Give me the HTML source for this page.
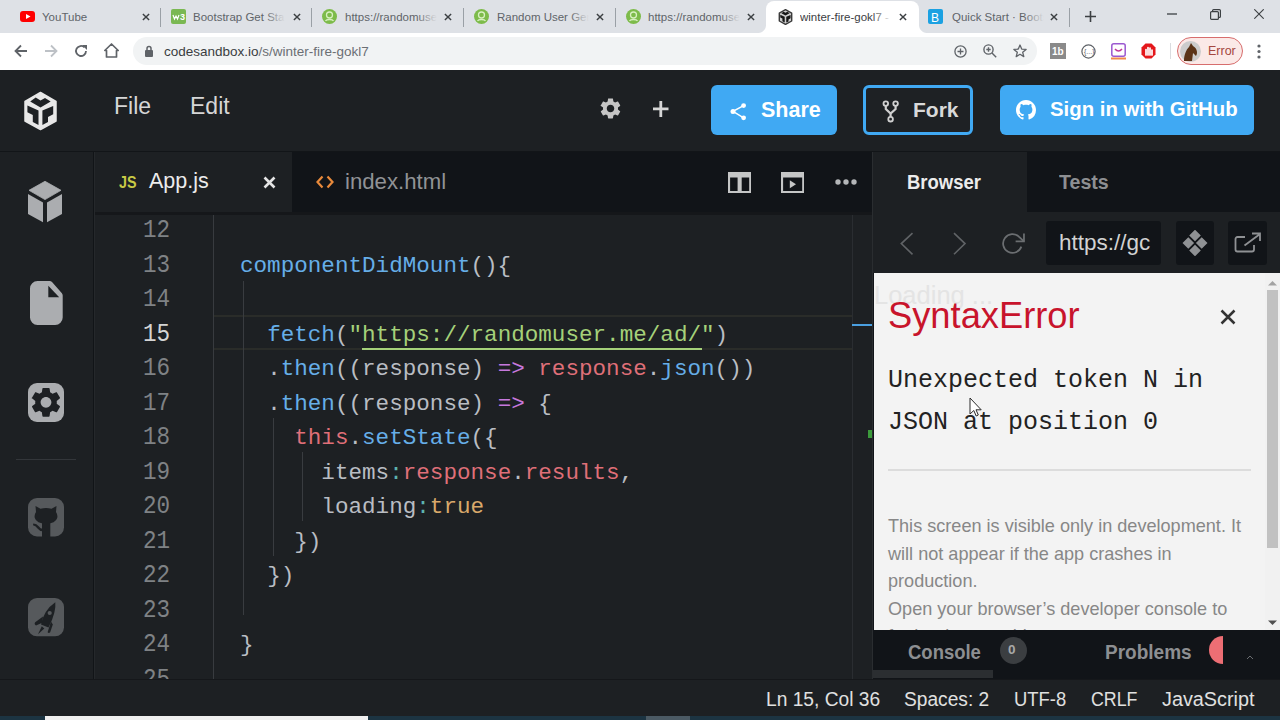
<!DOCTYPE html>
<html><head><meta charset="utf-8">
<style>
*{margin:0;padding:0;box-sizing:border-box}
html,body{width:1280px;height:720px;overflow:hidden;background:#1d2023;font-family:"Liberation Sans",sans-serif}
.a{position:absolute}
.t{position:absolute;white-space:nowrap}
/* chrome */
#tabs{left:0;top:0;width:1280px;height:33px;background:#dee1e6}
.ctab{position:absolute;top:0;height:33px;font-size:13px;color:#3c4043}
.ctab .ic{position:absolute;top:9px;width:15px;height:15px}
.ctab .tx{position:absolute;top:10px;font-size:11.5px;line-height:15px;width:92px;overflow:hidden;white-space:nowrap;color:#606469}
.ctab .tx:after{content:"";position:absolute;right:0;top:0;width:20px;height:15px;background:linear-gradient(90deg,rgba(222,225,230,0),#dee1e6)}
.ctab.act .tx:after{background:linear-gradient(90deg,rgba(255,255,255,0),#fff)}
.ctab .x{position:absolute;top:13px;width:8px;height:8px}
.sep{position:absolute;top:8px;width:1px;height:19px;background:#9aa0a6}
#addr{left:0;top:33px;width:1280px;height:37px;background:#fff}
#omni{left:133px;top:37px;width:904px;height:28px;border-radius:14px;background:#f1f3f4}
/* csb */
#hdr{left:0;top:70px;width:1280px;height:82px;background:#1d2023;border-bottom:1px solid #121518}
.btn{position:absolute;top:85px;height:50px;border-radius:6px;background:#40a9f3;color:#fff;font-weight:bold;font-size:21px}
#act{left:0;top:152px;width:95px;height:527px;background:#1d2023;border-right:1px solid #25282b}
#act:after{content:"";position:absolute;left:93px;top:0;width:1px;height:527px;background:#111417}
#etabs{left:95px;top:152px;width:777px;height:60px;background:#111418}
#code{left:95px;top:212px;width:778px;height:467px;background:#1d2023;overflow:hidden}
#rp{left:872px;top:152px;width:408px;height:527px;background:#111418;border-left:1px solid #2a2d30}
#status{left:0;top:679px;width:1280px;height:37px;background:#1d2023;border-top:1px solid #15171a}
#task{left:0;top:716px;width:1280px;height:4px;background:#1c3442}
.mono{font-family:"Liberation Mono",monospace}
.ln{position:absolute;left:0;margin-top:1px;width:75px;text-align:right;color:#7f8285;font-size:22.6px;line-height:34.5px;transform:scaleY(1.15)}
.cl{position:absolute;left:145px;margin-top:1.5px;font-size:22.6px;line-height:34.5px;color:#c5c8c6;white-space:pre}
.fn{color:#66aee8}
.pu{color:#c678dd}
.rd{color:#df6f78}
.or{color:#d8a86a}
.gn{color:#a5d17a}
.gr{color:#b9bdc3}
.cy{color:#5db3b0}
</style></head><body>

<!-- ============ CHROME TAB STRIP ============ -->
<div id="tabs" class="a">
  <div class="ctab" style="left:8px;width:152px">
    <svg class="ic" style="left:12px" viewBox="0 0 15 15"><rect x="0" y="2" width="15" height="11" rx="3" fill="#f00"/><path d="M6 5 L10.5 7.5 L6 10Z" fill="#fff"/></svg>
    <div class="tx" style="left:34px">YouTube</div>
    <svg class="x" style="left:134px" viewBox="0 0 9 9"><path d="M1 1L8 8M8 1L1 8" stroke="#3c4043" stroke-width="1.6"/></svg>
  </div>
  <div class="sep" style="left:160px"></div>
  <div class="ctab" style="left:160px;width:152px">
    <svg class="ic" style="left:11px" viewBox="0 0 15 15"><rect x="0" y="0" width="15" height="15" rx="2" fill="#7ab852"/><path d="M2 6l1.5 4 1.5-3 1.5 3 1.5-4" stroke="#fff" stroke-width="1.2" fill="none"/><text x="9" y="11" font-size="9" fill="#fff" font-family="Liberation Sans" font-weight="bold">3</text></svg>
    <div class="tx" style="left:33px">Bootstrap Get Started</div>
    <svg class="x" style="left:133px" viewBox="0 0 9 9"><path d="M1 1L8 8M8 1L1 8" stroke="#3c4043" stroke-width="1.6"/></svg>
  </div>
  <div class="sep" style="left:311px"></div>
  <div class="ctab" style="left:311px;width:152px">
    <svg class="ic" style="left:11px" viewBox="0 0 15 15"><circle cx="7.5" cy="7.5" r="7.5" fill="#7dbb4a"/><circle cx="7.5" cy="6" r="3" fill="none" stroke="#d7f0c0" stroke-width="1.3"/><path d="M3.5 12c1-2 7-2 8 0" stroke="#d7f0c0" stroke-width="1.3" fill="none"/></svg>
    <div class="tx" style="left:34px">https://randomuser.me</div>
    <svg class="x" style="left:133px" viewBox="0 0 9 9"><path d="M1 1L8 8M8 1L1 8" stroke="#3c4043" stroke-width="1.6"/></svg>
  </div>
  <div class="sep" style="left:463px"></div>
  <div class="ctab" style="left:463px;width:152px">
    <svg class="ic" style="left:11px" viewBox="0 0 15 15"><circle cx="7.5" cy="7.5" r="7.5" fill="#7dbb4a"/><circle cx="7.5" cy="6" r="3" fill="none" stroke="#d7f0c0" stroke-width="1.3"/><path d="M3.5 12c1-2 7-2 8 0" stroke="#d7f0c0" stroke-width="1.3" fill="none"/></svg>
    <div class="tx" style="left:34px">Random User Generator</div>
    <svg class="x" style="left:133px" viewBox="0 0 9 9"><path d="M1 1L8 8M8 1L1 8" stroke="#3c4043" stroke-width="1.6"/></svg>
  </div>
  <div class="sep" style="left:615px"></div>
  <div class="ctab" style="left:615px;width:152px">
    <svg class="ic" style="left:11px" viewBox="0 0 15 15"><circle cx="7.5" cy="7.5" r="7.5" fill="#7dbb4a"/><circle cx="7.5" cy="6" r="3" fill="none" stroke="#d7f0c0" stroke-width="1.3"/><path d="M3.5 12c1-2 7-2 8 0" stroke="#d7f0c0" stroke-width="1.3" fill="none"/></svg>
    <div class="tx" style="left:33px">https://randomuser.me</div>
    <svg class="x" style="left:132px" viewBox="0 0 9 9"><path d="M1 1L8 8M8 1L1 8" stroke="#3c4043" stroke-width="1.6"/></svg>
  </div>
  <div class="a" style="left:758px;top:25px;width:8px;height:8px;background:radial-gradient(circle at 0 0,#dee1e6 7.5px,#fff 8.5px)"></div>
  <div class="a" style="left:919px;top:25px;width:8px;height:8px;background:radial-gradient(circle at 100% 0,#dee1e6 7.5px,#fff 8.5px)"></div>
  <div class="ctab act" style="left:766px;top:1px;width:153px;height:32px;background:#fff;border-radius:8px 8px 0 0">
    <svg class="ic" style="left:11.5px;top:8px;width:15px;height:16px" viewBox="3 3 35 40"><path d="M20.5 4.5L36 13.5V33L20.5 41.6 5 33V13.5z" fill="#cfcfcf" stroke="#3a3a3a" stroke-width="3.5" stroke-linejoin="round"/><path d="M10.2 13.4L20.5 19.5 30.7 13.4 25 9.9 20.5 12.5 15.7 9.6z" fill="#151515"/><path d="M7.4 17.6L18.5 22.5V37L12.8 33.9V26.9L7.4 24.3z" fill="#151515"/><path d="M33.2 17.9L22.4 22.5V37L28 34V29L33.2 26.3z" fill="#151515"/></svg>
    <div class="tx" style="left:34px;top:9px;color:#3c4043">winter-fire-gokl7 - CodeSandbox</div>
    <svg class="x" style="left:133px;top:12px" viewBox="0 0 9 9"><path d="M1 1L8 8M8 1L1 8" stroke="#3c4043" stroke-width="1.6"/></svg>
  </div>
  <div class="ctab" style="left:919px;width:152px">
    <svg class="ic" style="left:9px" viewBox="0 0 15 15"><rect width="15" height="15" rx="2" fill="#1ba1e2"/><text x="3" y="12.5" font-size="12" fill="#fff" font-family="Liberation Sans">B</text></svg>
    <div class="tx" style="left:33px">Quick Start · Bootstrap</div>
    <svg class="x" style="left:131px" viewBox="0 0 9 9"><path d="M1 1L8 8M8 1L1 8" stroke="#3c4043" stroke-width="1.6"/></svg>
  </div>
  <div class="sep" style="left:1069px"></div>
  <svg class="a" style="left:1085px;top:11px" width="11" height="11" viewBox="0 0 11 11"><path d="M5.5 0v11M0 5.5h11" stroke="#3c4043" stroke-width="1.6"/></svg>
  <svg class="a" style="left:1166.5px;top:13px" width="10" height="2" viewBox="0 0 10 2"><path d="M0 1h10" stroke="#3c4043" stroke-width="1.3"/></svg>
  <svg class="a" style="left:1209.5px;top:8.5px" width="11" height="11" viewBox="0 0 11 11"><rect x="0.6" y="2.6" width="7.8" height="7.8" rx="1" fill="none" stroke="#3c4043" stroke-width="1.2"/><path d="M2.6 2.6V1.6a1 1 0 0 1 1-1h5.8a1 1 0 0 1 1 1v5.8a1 1 0 0 1-1 1h-1" fill="none" stroke="#3c4043" stroke-width="1.2"/></svg>
  <svg class="a" style="left:1253.5px;top:9px" width="10" height="10" viewBox="0 0 10 10"><path d="M0.3 0.3L9.7 9.7M9.7 0.3L0.3 9.7" stroke="#3c4043" stroke-width="1.1"/></svg>
</div>

<!-- ============ ADDRESS BAR ============ -->
<div id="addr" class="a">
  <svg class="a" style="left:14px;top:11px" width="14" height="14" viewBox="0 0 14 14"><path d="M13 7H2M7 1.5L1.5 7 7 12.5" fill="none" stroke="#5f6368" stroke-width="1.8"/></svg>
  <svg class="a" style="left:44px;top:11px" width="14" height="14" viewBox="0 0 14 14"><path d="M1 7h11M7 1.5L12.5 7 7 12.5" fill="none" stroke="#bdc1c6" stroke-width="1.8"/></svg>
  <svg class="a" style="left:74px;top:11px" width="14" height="14" viewBox="0 0 14 14"><path d="M12 7a5 5 0 1 1-1.5-3.6" fill="none" stroke="#5f6368" stroke-width="1.8"/><path d="M8 1h5v5z" fill="#5f6368"/></svg>
  <svg class="a" style="left:104px;top:10px" width="15" height="15" viewBox="0 0 15 15"><path d="M2.5 14V7.5H0.8L7.5 1l6.7 6.5h-1.7V14z" fill="none" stroke="#5f6368" stroke-width="1.7" stroke-linejoin="round"/></svg>
</div>
<div id="omni" class="a">
  <svg class="a" style="left:12px;top:8px" width="8" height="12" viewBox="0 0 8 12"><rect x="0" y="5" width="8" height="7" rx="1" fill="#5f6368"/><path d="M2 5.5V3.5a2 2 0 0 1 4 0v2" fill="none" stroke="#5f6368" stroke-width="1.5"/></svg>
  <div class="t" style="left:31px;top:7px;font-size:13.5px;line-height:16px;color:#3a3d41">codesandbox.io<span style="color:#6b6f74">/s/winter-fire-gokl7</span></div>
</div>
<svg class="a" style="left:954px;top:45px" width="13" height="13" viewBox="0 0 13 13"><circle cx="6.5" cy="6.5" r="5.6" fill="none" stroke="#5f6368" stroke-width="1.3"/><path d="M6.5 3.5v6M3.5 6.5h6" stroke="#5f6368" stroke-width="1.3"/></svg>
<svg class="a" style="left:983px;top:44px" width="14" height="14" viewBox="0 0 14 14"><circle cx="5.5" cy="5.5" r="4.6" fill="none" stroke="#5f6368" stroke-width="1.4"/><path d="M9 9l4.2 4.2M5.5 3.3v4.4M3.3 5.5h4.4" stroke="#5f6368" stroke-width="1.4"/></svg>
<svg class="a" style="left:1013px;top:44px" width="14" height="14" viewBox="0 0 14 14"><path d="M7 1l1.7 4.1 4.4.3-3.4 2.9 1.1 4.3L7 10.3l-3.8 2.3 1.1-4.3L.9 5.4l4.4-.3z" fill="none" stroke="#5f6368" stroke-width="1.3" stroke-linejoin="round"/></svg>
<svg class="a" style="left:1050px;top:43px" width="16" height="16" viewBox="0 0 16 16"><rect width="16" height="16" fill="#8a8a8a"/><text x="2" y="12" font-size="10" font-weight="bold" fill="#fff" font-family="Liberation Sans">1b</text></svg>
<svg class="a" style="left:1081px;top:44px" width="15" height="15" viewBox="0 0 15 15"><circle cx="7.5" cy="7.5" r="6.6" fill="none" stroke="#5f6368" stroke-width="1.2"/><text x="3" y="10" font-size="7" fill="#5f6368" font-family="Liberation Sans">{...}</text></svg>
<svg class="a" style="left:1111px;top:43px" width="15" height="17" viewBox="0 0 15 17"><rect x="0.8" y="0.8" width="13.4" height="12.4" rx="2" fill="none" stroke="#9b59d0" stroke-width="1.5"/><path d="M4 6q3.5 4 7 0" fill="none" stroke="#c0399a" stroke-width="1.5"/><rect x="0" y="14.5" width="15" height="2" fill="#f08a4b"/></svg>
<svg class="a" style="left:1141px;top:43px" width="15" height="16" viewBox="0 0 15 16"><path d="M4.5 0.5h6l4 4v7l-4 4h-6l-4-4v-7z" fill="#e4171b"/><path d="M5 12V6.5M7 12V4.5M9 12V5M11 12V7" stroke="#fff" stroke-width="1.7" stroke-linecap="round"/></svg>
<div class="a" style="left:1170px;top:43px;width:1px;height:16px;background:#dadce0"></div>
<div class="a" style="left:1177px;top:37px;width:66px;height:28px;border-radius:14px;border:1.5px solid #d76d6d;background:#fbe9e7"></div>
<div class="a" style="left:1180px;top:41px;width:21px;height:21px;border-radius:50%;background:#ccc"></div>
<svg class="a" style="left:1180px;top:41px" width="21" height="21" viewBox="0 0 21 21"><path d="M4 20C4 14 6 9 9 6L11 2 13 5C17 7 18 12 16 15L13 12 12 20z" fill="#5a3317"/></svg>
<div class="t" style="left:1208px;top:43px;font-size:12.5px;line-height:16px;color:#a5473f">Error</div>
<svg class="a" style="left:1257px;top:44px" width="4" height="15" viewBox="0 0 4 15"><circle cx="2" cy="2" r="1.6" fill="#5f6368"/><circle cx="2" cy="7.5" r="1.6" fill="#5f6368"/><circle cx="2" cy="13" r="1.6" fill="#5f6368"/></svg>

<!-- ============ CSB HEADER ============ -->
<div id="hdr" class="a">
  <svg class="a" style="left:20px;top:18px" width="42" height="46" viewBox="0 0 42 46"><path d="M20.5 4.5L36 13.5V33L20.5 41.6 5 33V13.5z" fill="#e8e8e8" stroke="#e8e8e8" stroke-width="1.5" stroke-linejoin="round"/><path d="M10.2 13.4L20.5 19.5 30.7 13.4 25 9.9 20.5 12.5 15.7 9.6z" fill="#1e2124"/><path d="M7.4 17.6L18.5 22.5V37L12.8 33.9V26.9L7.4 24.3z" fill="#1e2124"/><path d="M33.2 17.9L22.4 22.5V37L28 34V29L33.2 26.3z" fill="#1e2124"/></svg>
  <div class="t" style="left:114px;top:23px;font-size:23px;line-height:27px;color:#d6d6d6">File</div>
  <div class="t" style="left:190px;top:23px;font-size:23px;line-height:27px;color:#d6d6d6">Edit</div>
  <svg class="a" style="left:598px;top:25.5px" width="25" height="25" viewBox="0 0 24 24"><path fill="#c5c5c5" d="M19.14 12.94c.04-.3.06-.61.06-.94 0-.32-.02-.64-.07-.94l2.03-1.58c.18-.14.23-.41.12-.61l-1.92-3.32c-.12-.22-.37-.29-.59-.22l-2.39.96c-.5-.38-1.03-.7-1.62-.94l-.36-2.54c-.04-.24-.24-.41-.48-.41h-3.84c-.24 0-.43.17-.47.41l-.36 2.54c-.59.24-1.13.57-1.62.94l-2.39-.96c-.22-.08-.47 0-.59.22L2.74 8.87c-.12.21-.8.47.12.61l2.03 1.58c-.05.3-.09.63-.09.94s.02.64.07.94l-2.03 1.58c-.18.14-.23.41-.12.61l1.92 3.32c.12.22.37.29.59.22l2.39-.96c.5.38 1.03.7 1.62.94l.36 2.54c.05.24.24.41.48.41h3.84c.24 0 .44-.17.47-.41l.36-2.54c.59-.24 1.13-.56 1.62-.94l2.39.96c.22.08.47 0 .59-.22l1.92-3.32c.12-.22.07-.47-.12-.61l-2.01-1.58zM12 15.6c-1.98 0-3.6-1.62-3.6-3.6s1.62-3.6 3.6-3.6 3.6 1.62 3.6 3.6-1.62 3.6-3.6 3.6z"/></svg>
  <svg class="a" style="left:652.5px;top:30.5px" width="16" height="16" viewBox="0 0 16 16"><path d="M7.8 0v16M0 7.8h15.5" stroke="#d6d6d6" stroke-width="2.8"/></svg>
</div>
<div class="btn" style="left:711px;width:126px">
  <svg class="a" style="left:18px;top:16px" width="18" height="20" viewBox="0 0 18 20"><circle cx="14.6" cy="4.6" r="2.4" fill="#fff"/><circle cx="4" cy="10.4" r="2.5" fill="#fff"/><circle cx="14.6" cy="16.8" r="2.4" fill="#fff"/><path d="M14.6 4.6L4 10.4 14.6 16.8" stroke="#fff" stroke-width="1.5" fill="none"/></svg>
  <div class="t" style="left:50px;top:13px;line-height:24px;font-size:21.5px">Share</div>
</div>
<div class="btn" style="left:863px;width:110px;background:#1e2124;border:3px solid #40a9f3;color:#d9d9d9">
  <svg class="a" style="left:14px;top:10px" width="22" height="26" viewBox="0 0 22 26"><circle cx="5.8" cy="5.6" r="2.3" fill="none" stroke="#d0d0d0" stroke-width="1.8"/><circle cx="15.6" cy="5.6" r="2.3" fill="none" stroke="#d0d0d0" stroke-width="1.8"/><circle cx="10.6" cy="21.2" r="2.3" fill="none" stroke="#d0d0d0" stroke-width="1.8"/><path d="M5.8 7.9V11L10.6 15.5 15.6 11V7.9M10.6 15.5V18.9" fill="none" stroke="#d0d0d0" stroke-width="2.2"/></svg>
  <div class="t" style="left:47px;top:10px;line-height:24px">Fork</div>
</div>
<div class="btn" style="left:1000px;width:254px">
  <svg class="a" style="left:16px;top:15px" width="20" height="20" viewBox="0 0 16 16"><path fill="#fff" d="M8 0C3.58 0 0 3.58 0 8c0 3.54 2.29 6.53 5.47 7.59.4.07.55-.17.55-.38 0-.19-.01-.82-.01-1.49-2.01.37-2.53-.49-2.69-.94-.09-.23-.48-.94-.82-1.13-.28-.15-.68-.52-.01-.53.63-.01 1.08.58 1.23.82.72 1.21 1.87.87 2.33.66.07-.52.28-.87.51-1.07-1.78-.2-3.640-.89-3.64-3.95 0-.87.31-1.59.82-2.15-.08-.2-.36-1.02.08-2.12 0 0 .67-.21 2.2.82.64-.18 1.32-.27 2-.27.68 0 1.36.09 2 .27 1.53-1.04 2.2-.82 2.2-.82.44 1.1.16 1.92.08 2.12.51.56.82 1.27.82 2.15 0 3.07-1.87 3.75-3.65 3.95.29.25.54.73.54 1.48 0 1.07-.01 1.93-.01 2.2 0 .21.15.46.55.38A8.013 8.013 0 0016 8c0-4.42-3.58-8-8-8z"/></svg>
  <div class="t" style="left:50px;top:12px;line-height:24px;transform:scaleX(.969);transform-origin:0 0">Sign in with GitHub</div>
</div>

<!-- ============ ACTIVITY BAR ============ -->
<div id="act" class="a">
  <svg class="a" style="left:27px;top:28px" width="36" height="44" viewBox="0 0 36 44"><path d="M18 1.3L34 10.3 18 19.6 2 10.3z" fill="#abadb0" stroke="#abadb0" stroke-width="0.8" stroke-linejoin="round"/><path d="M1 14L16 22.6V42.3L1 34z" fill="#abadb0"/><path d="M35 14L20 22.6V42.3L35 34z" fill="#abadb0"/></svg>
  <svg class="a" style="left:29.8px;top:128.6px" width="33" height="44" viewBox="0 0 33 44"><path d="M7.5 0H19.7Q21 0 22 1L31.7 12Q32.7 13 32.7 14.5V36.5A7.5 7.5 0 0 1 25.2 44H7.5A7.5 7.5 0 0 1 0 36.5V7.5A7.5 7.5 0 0 1 7.5 0z" fill="#abadb0"/><path d="M18.3 4.7V16.3H29.2z" fill="#1d2023"/></svg>
  <svg class="a" style="left:28px;top:230.5px" width="36" height="39" viewBox="0 0 36 39"><rect width="36" height="39" rx="9" fill="#abadb0"/><g transform="translate(0 1.3) scale(1.5)"><path fill="#1d2023" d="M19.14 12.94c.04-.3.06-.61.06-.94 0-.32-.02-.64-.07-.94l2.03-1.58c.18-.14.23-.41.12-.61l-1.92-3.32c-.12-.22-.37-.29-.59-.22l-2.39.96c-.5-.38-1.03-.7-1.62-.94l-.36-2.54c-.04-.24-.24-.41-.48-.41h-3.84c-.24 0-.43.17-.47.41l-.36 2.54c-.59.24-1.13.57-1.62.94l-2.39-.96c-.22-.08-.47 0-.59.22L2.74 8.87c-.12.21-.8.47.12.61l2.03 1.58c-.05.3-.09.63-.09.94s.02.64.07.94l-2.03 1.58c-.18.14-.23.41-.12.61l1.92 3.32c.12.22.37.29.59.22l2.39-.96c.5.38 1.03.7 1.62.94l.36 2.54c.05.24.24.41.48.41h3.84c.24 0 .44-.17.47-.41l.36-2.54c.59-.24 1.13-.56 1.62-.94l2.39.96c.22.08.47 0 .59-.22l1.92-3.32c.12-.22.07-.47-.12-.61l-2.01-1.58zM12 15.6c-1.98 0-3.6-1.62-3.6-3.6s1.62-3.6 3.6-3.6 3.6 1.62 3.6 3.6-1.62 3.6-3.6 3.6z"/></g></svg>
  <div class="a" style="left:16px;top:307px;width:60px;height:1px;background:#33363a"></div>
  <svg class="a" style="left:28px;top:346.3px" width="36" height="39" viewBox="0 0 36 39"><rect width="36" height="38.4" rx="9" fill="#56595c"/><path fill="#1d2023" d="M8 14L7.5 8L12.5 10.8Q18 9.3 23.5 10.8L28.5 8L28 14Q30 17 29.2 20Q27.5 25.7 18 25.7Q8.5 25.7 6.8 20Q6 17 8 14z"/><rect x="14" y="24" width="8.3" height="15" fill="#1d2023"/><path fill="#1d2023" d="M5 27.2Q7.5 27.5 9.5 30.5Q11.5 33.2 14.5 33.2V30.8Q12.5 30.8 11 28.5Q8.5 25.5 5.3 25.6z"/></svg>
  <svg class="a" style="left:28px;top:446px" width="36" height="39" viewBox="0 0 36 39"><rect width="36" height="38.3" rx="9" fill="#56595c"/><path fill="#1d2023" d="M27.3 4.3Q28.5 14 20.5 29.6L13 26.4Q16 12 27.3 4.3z"/><path fill="#1d2023" d="M15 18.5L7.2 24.2Q5.8 26.3 8 27.4L14.2 24.8z"/><path fill="#1d2023" d="M23 23.5L19.6 34.2Q20.8 35.6 22.2 34.2L24.8 26.5z"/><path fill="#1d2023" d="M13.8 28.2L10 36.2L16.3 30.6z"/><circle cx="21.7" cy="15" r="2.1" fill="#56595c"/></svg>
</div>

<!-- ============ EDITOR TABS ============ -->
<div id="etabs" class="a">
  <div class="a" style="left:0;top:0;width:197px;height:60px;background:#1d2023"></div>
  <div class="t" style="left:24px;top:21px;font-size:17.3px;font-weight:bold;color:#c8ca45;line-height:18px;transform:scaleX(.83);transform-origin:0 0">JS</div>
  <div class="t" style="left:54px;top:16px;font-size:21.5px;line-height:27px;color:#ececec">App.js</div>
  <svg class="a" style="left:168px;top:24px" width="13" height="13" viewBox="0 0 13 13"><path d="M1.5 1.5l10 10M11.5 1.5l-10 10" stroke="#e5e5e5" stroke-width="2.6"/></svg>
  <svg class="a" style="left:221px;top:23px" width="18" height="14" viewBox="0 0 18 14"><path d="M6.5 1.5L1.5 7l5 5.5M11.5 1.5l5 5.5-5 5.5" fill="none" stroke="#e98a3b" stroke-width="2.2"/></svg>
  <div class="t" style="left:250px;top:16px;font-size:22.2px;line-height:27px;color:#909295">index.html</div>
  <svg class="a" style="left:633px;top:20.4px" width="23.2" height="21.1" viewBox="0 0 23.2 21.1"><path fill-rule="evenodd" fill="#c5c6c6" d="M0 0H23.2V21.1H0zM2.1 5.6V19H9.6V5.6zM13.7 5.6V19H21.2V5.6z"/></svg>
  <svg class="a" style="left:686px;top:20.4px" width="23.3" height="21.1" viewBox="0 0 23.3 21.1"><path fill-rule="evenodd" fill="#c5c6c6" d="M0 0H23.3V21.1H0zM2.1 5.6V19H21.2V5.6z"/><path d="M8.8 8.2L15 12.2 8.8 16.2z" fill="#c5c6c6"/></svg>
  <svg class="a" style="left:740px;top:27px" width="22" height="6" viewBox="0 0 22 6"><circle cx="3" cy="3" r="2.7" fill="#b4b6b8"/><circle cx="11" cy="3" r="2.7" fill="#b4b6b8"/><circle cx="19" cy="3" r="2.7" fill="#b4b6b8"/></svg>
</div>

<!-- ============ CODE ============ -->
<div id="code" class="a mono">
  <div class="a" style="left:118px;top:0;width:1px;height:467px;background:#383b3f"></div>
  <div class="a" style="left:757px;top:0;width:1px;height:467px;background:#2a2d31"></div>
  <div class="a" style="left:0;top:0;width:778px;height:3px;background:#15171a"></div>
  <div class="ln" style="top:0px">12</div>
  <div class="ln" style="top:34.5px">13</div>
  <div class="ln" style="top:69px">14</div>
  <div class="ln" style="top:103.5px;color:#d4d4d4">15</div>
  <div class="ln" style="top:138px">16</div>
  <div class="ln" style="top:172.5px">17</div>
  <div class="ln" style="top:207px">18</div>
  <div class="ln" style="top:241.5px">19</div>
  <div class="ln" style="top:276px">20</div>
  <div class="ln" style="top:310.5px">21</div>
  <div class="ln" style="top:345px">22</div>
  <div class="ln" style="top:379.5px">23</div>
  <div class="ln" style="top:414px">24</div>
  <div class="ln" style="top:448.5px">25</div>
  <!-- current line box -->
  <div class="a" style="left:119px;top:103px;width:638px;height:35px;border-top:2px solid #2a2c29;border-bottom:2px solid #2a2c29"></div>
  <!-- indent guides -->
  <div class="a" style="left:148px;top:69px;width:1px;height:334px;background:#393c40"></div>
  <div class="a" style="left:178px;top:206px;width:1px;height:138px;background:#393c40"></div>
  <div class="a" style="left:207px;top:240px;width:1px;height:69px;background:#393c40"></div>
  <div class="cl" style="top:35px"><span class="fn">componentDidMount</span><span class="gr">(){</span></div>
  <div class="cl" style="top:104px">  <span class="fn">fetch</span><span class="gr">(</span><span class="gn">"https://randomuser.me/ad/"</span><span class="gr">)</span></div>
  <div class="cl" style="top:138px">  <span class="gr">.</span><span class="fn">then</span><span class="gr">((response) </span><span class="pu">=&gt;</span> <span class="rd">response</span><span class="gr">.</span><span class="fn">json</span><span class="gr">())</span></div>
  <div class="cl" style="top:173px">  <span class="gr">.</span><span class="fn">then</span><span class="gr">((response) </span><span class="pu">=&gt;</span> <span class="gr">{</span></div>
  <div class="cl" style="top:207px">    <span class="rd">this</span><span class="gr">.</span><span class="fn">setState</span><span class="gr">({</span></div>
  <div class="cl" style="top:242px">      <span class="gr">items</span><span class="cy">:</span><span class="rd">response</span><span class="gr">.</span><span class="rd">results</span><span class="gr">,</span></div>
  <div class="cl" style="top:276px">      <span class="gr">loading</span><span class="cy">:</span><span class="or">true</span></div>
  <div class="cl" style="top:311px">    <span class="gr">})</span></div>
  <div class="cl" style="top:345px">  <span class="gr">})</span></div>
  <div class="cl" style="top:414px"><span class="gr">}</span></div>
  <!-- underline on url -->
  <div class="a" style="left:267px;top:135.5px;width:340px;height:2px;background:#a5d17a"></div>
  <!-- minimap markers -->
  <div class="a" style="left:757px;top:112px;width:20px;height:2px;background:#4a9fe0"></div>
  <div class="a" style="left:773px;top:218px;width:4px;height:8px;background:#3c9a3c"></div>
</div>

<!-- ============ RIGHT PANEL ============ -->
<div id="rp" class="a">
  <div class="a" style="left:0;top:0;width:154px;height:60px;background:#1d2023"></div>
  <div class="t" style="left:34px;top:18px;font-size:20px;font-weight:bold;color:#ececec;line-height:24px;transform:scaleX(.924);transform-origin:0 0">Browser</div>
  <div class="t" style="left:186px;top:18px;font-size:20px;font-weight:bold;color:#8d8f92;line-height:24px;transform:scaleX(.98);transform-origin:0 0">Tests</div>
  <div class="a" style="left:0;top:60px;width:407px;height:61px;background:#1d2023"></div>
  <svg class="a" style="left:27px;top:80px" width="15" height="23" viewBox="0 0 15 23"><path d="M12.5 1.2L1.3 11.6 12.5 22.3" fill="none" stroke="#606366" stroke-width="1.6"/></svg>
  <svg class="a" style="left:80px;top:80px" width="15" height="23" viewBox="0 0 15 23"><path d="M1 1.2L12 11.6 1 22.3" fill="none" stroke="#606366" stroke-width="1.6"/></svg>
  <svg class="a" style="left:127.2px;top:79.2px" width="25" height="25" viewBox="0 0 24 24"><path d="M20.49 15a9 9 0 1 1-2.12-9.36L23 10" fill="none" stroke="#6b6e71" stroke-width="1.7"/><path d="M23 2.5V10h-8" fill="none" stroke="#6b6e71" stroke-width="1.7"/></svg>
  <div class="a" style="left:173px;top:69px;width:115px;height:44px;background:#111418;border-radius:3px;overflow:hidden">
    <div class="t" style="left:13px;top:9px;font-size:22.5px;line-height:26px;color:#d2d2d2">https://gc</div>
  </div>
  <div class="a" style="left:303px;top:69px;width:38px;height:44px;background:#111418;border-radius:3px"></div>
  <svg class="a" style="left:308.7px;top:78px" width="26" height="26" viewBox="0 0 26 26"><path d="M13 -0.3l5.8 5.8-5.8 5.8-5.8-5.8zM6.3 7.2l5.8 5.8-5.8 5.8-5.8-5.8zM19.7 7.2l5.8 5.8-5.8 5.8-5.8-5.8zM13 14.7l5.8 5.8-5.8 5.8-5.8-5.8z" fill="#8f9194"/></svg>
  <div class="a" style="left:354.5px;top:69px;width:39.5px;height:44px;background:#111418;border-radius:3px"></div>
  <svg class="a" style="left:361px;top:80px" width="28" height="22" viewBox="0 0 28 22"><path d="M11 5H3.5A2 2 0 0 0 1.5 7v10.5a2 2 0 0 0 2 2H18a2 2 0 0 0 2-2V13" fill="none" stroke="#8f9194" stroke-width="1.8"/><path d="M10.5 13.5L26 2M18 1.5h8V9" fill="none" stroke="#8f9194" stroke-width="1.8"/></svg>
  <!-- iframe -->
  <div class="a" style="left:1px;top:121px;width:407px;height:357px;background:#f3f3f3;overflow:hidden">
    <div class="t" style="left:0;top:8px;font-size:25.5px;line-height:28px;color:#e4e4e4">Loading ...</div>
    <div class="t" style="left:14px;top:20px;font-size:36.3px;line-height:44px;color:#c8142c;margin-top:1px">SyntaxError</div>
    <svg class="a" style="left:346px;top:36px" width="16" height="16" viewBox="0 0 16 16"><path d="M1.5 1.5l13 13M14.5 1.5l-13 13" stroke="#333" stroke-width="2.5"/></svg>
    <div class="t mono" style="left:14px;top:87px;font-size:25px;line-height:42px;color:#222">Unexpected token N in<br>JSON at position 0</div>
    <div class="a" style="left:14px;top:196px;width:363px;height:2px;background:#dcdcdc"></div>
    <div class="t" style="left:14px;top:240px;font-size:18.1px;line-height:27.6px;color:#878787">This screen is visible only in development. It<br>will not appear if the app crashes in<br>production.<br>Open your browser’s developer console to<br>further inspect this error.</div>
    <div class="a" style="left:391px;top:0;width:15px;height:357px;background:#f1f1f1"></div>
    <div class="a" style="left:393px;top:17px;width:11px;height:258px;background:#c1c1c1"></div>
    <svg class="a" style="left:394px;top:7px" width="9" height="6" viewBox="0 0 9 6"><path d="M0 5.500L4.5 1 9 5.500z" fill="#a3a3a3"/></svg>
    <svg class="a" style="left:394px;top:347px" width="9" height="6" viewBox="0 0 9 6"><path d="M0 .5L4.5 5 9 .5z" fill="#505050"/></svg>
  </div>
  <!-- console bar -->
  <div class="a" style="left:0;top:478px;width:407px;height:49px;background:#111418"></div>
  <div class="t" style="left:35px;top:487.5px;font-size:21px;font-weight:bold;color:#8d8f92;line-height:24px;transform:scaleX(.88);transform-origin:0 0">Console</div>
  <div class="a" style="left:127px;top:485px;width:27px;height:27px;border-radius:50%;background:#3b3e41"></div>
  <div class="t" style="left:135px;top:490px;font-size:13.5px;font-weight:bold;color:#a8a8a8;line-height:16px">0</div>
  <div class="t" style="left:232px;top:487.5px;font-size:21px;font-weight:bold;color:#8d8f92;line-height:24px;transform:scaleX(.905);transform-origin:0 0">Problems</div>
  <div class="a" style="left:336px;top:484px;width:28px;height:28px;border-radius:50%;background:#ed6e74;clip-path:inset(0 50% 0 0)"></div>
  <div class="a" style="left:0;top:518px;width:120px;height:8px;background:#2b2e31"></div>
</div>

<!-- ============ STATUS BAR ============ -->
<div id="status" class="a">
  <div class="t" style="left:766px;top:7px;font-size:20px;line-height:24px;color:#e0e0e0;transform:scaleX(.96);transform-origin:0 0">Ln 15, Col 36</div>
  <div class="t" style="left:904px;top:7px;font-size:20px;line-height:24px;color:#e0e0e0;transform:scaleX(.958);transform-origin:0 0">Spaces: 2</div>
  <div class="t" style="left:1014px;top:7px;font-size:20px;line-height:24px;color:#e0e0e0;transform:scaleX(.92);transform-origin:0 0">UTF-8</div>
  <div class="t" style="left:1091px;top:7px;font-size:20px;line-height:24px;color:#e0e0e0;transform:scaleX(.89);transform-origin:0 0">CRLF</div>
  <div class="t" style="left:1162px;top:7px;font-size:20px;line-height:24px;color:#e0e0e0;transform:scaleX(.99);transform-origin:0 0">JavaScript</div>
</div>
<div id="task" class="a">
  <div class="a" style="left:45px;top:0;width:323px;height:4px;background:#f0f0f0"></div>
  <div class="a" style="left:646px;top:0;width:44px;height:4px;background:#4b5a64"></div>
</div>
<svg class="a" style="left:968.5px;top:396.5px" width="14" height="20" viewBox="0 0 14 20"><path d="M1 1V17L4.8 13.5L7.2 19L9.3 18L7 12.8H12.2Z" fill="#fff" stroke="#2a2a2a" stroke-width="1" stroke-linejoin="round"/></svg>
<svg class="a" style="left:1246px;top:655px" width="8" height="5" viewBox="0 0 8 5"><path d="M1 4L4 1 7 4" fill="none" stroke="#6a6d70" stroke-width="1"/></svg>
</body></html>
